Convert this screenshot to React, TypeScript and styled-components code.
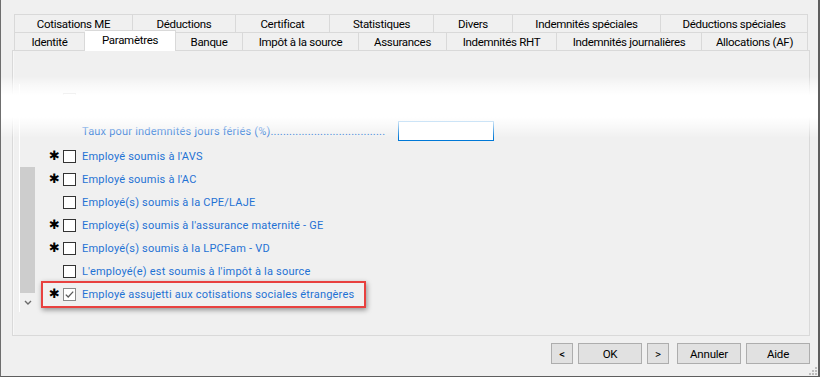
import React from "react";
import styled, { createGlobalStyle } from "styled-components";

const GlobalStyle = createGlobalStyle`
  html, body {
    margin: 0;
    padding: 0;
    background: #f0f0f0;
  }
  body {
    font-family: Roboto, "Liberation Sans", sans-serif;
  }
`;

type TabDef = { label: string; width: number; active?: boolean };

const topTabs: TabDef[] = [
  { label: "Cotisations ME", width: 119 },
  { label: "Déductions", width: 103 },
  { label: "Certificat", width: 94 },
  { label: "Statistiques", width: 104 },
  { label: "Divers", width: 79 },
  { label: "Indemnités spéciales", width: 148 },
  { label: "Déductions spéciales", width: 147 },
];

const bottomTabs: TabDef[] = [
  { label: "Identité", width: 71 },
  { label: "Paramètres", width: 91, active: true },
  { label: "Banque", width: 67 },
  { label: "Impôt à la source", width: 116 },
  { label: "Assurances", width: 88 },
  { label: "Indemnités RHT", width: 110 },
  { label: "Indemnités journalières", width: 145 },
  { label: "Allocations (AF)", width: 106 },
];

type Option = { label: string; required: boolean; checked?: boolean; highlighted?: boolean };

const options: Option[] = [
  { label: "Employé soumis à l'AVS", required: true },
  { label: "Employé soumis à l'AC", required: true },
  { label: "Employé(s) soumis à la CPE/LAJE", required: false },
  { label: "Employé(s) soumis à l'assurance maternité - GE", required: true },
  { label: "Employé(s) soumis à la LPCFam - VD", required: true },
  { label: "L'employé(e) est soumis à l'impôt à la source", required: false },
  { label: "Employé assujetti aux cotisations sociales étrangères", required: true, checked: true, highlighted: true },
];

export default function App() {
  return (
    <>
      <GlobalStyle />
      <Window>
        <TabStrip>
          <TabRow>
            {topTabs.map((t) => (
              <Tab key={t.label} $width={t.width}>
                {t.label}
              </Tab>
            ))}
          </TabRow>
          <TabRow>
            {bottomTabs.map((t) => (
              <Tab key={t.label} $width={t.width} $active={t.active}>
                {t.label}
              </Tab>
            ))}
          </TabRow>
        </TabStrip>

        <Panel>
          <ScrollBar>
            <Thumb />
            <ArrowDown>
              <svg width="8" height="5" viewBox="0 0 8 5">
                <path d="M1 1 L4 4 L7 1" fill="none" stroke="#6a6a6a" strokeWidth="1.4" />
              </svg>
            </ArrowDown>
          </ScrollBar>

          <Content>
            <OptionRow>
              <Star />
              <CheckBox />
            </OptionRow>

            <RateRow>
              <RateLabel>Taux pour indemnités jours fériés (%)</RateLabel>
              <Leader>{".".repeat(37)}</Leader>
              <RateInput />
            </RateRow>

            {options.map((o) => (
              <OptionRow key={o.label} $highlighted={o.highlighted}>
                <Star>{o.required ? "✱" : ""}</Star>
                <CheckBox $checked={o.checked}>
                  {o.checked && (
                    <svg width="11" height="11" viewBox="0 0 11 11">
                      <path d="M1.8 5.6 L4.2 8 L9.2 2.6" fill="none" stroke="#5a5a5a" strokeWidth="1.3" />
                    </svg>
                  )}
                </CheckBox>
                <OptionLabel>{o.label}</OptionLabel>
              </OptionRow>
            ))}
          </Content>
        </Panel>

        <ButtonBar>
          <DialogButton $width={22}>&lt;</DialogButton>
          <DialogButton $width={64}>OK</DialogButton>
          <DialogButton $width={22}>&gt;</DialogButton>
          <DialogButton $width={64} $gapLeft={8}>
            Annuler
          </DialogButton>
          <DialogButton $width={64}>Aide</DialogButton>
        </ButtonBar>

        <Grip>
          <svg width="8" height="8" viewBox="0 0 8 8">
            <rect x="6" y="0" width="2" height="2" fill="#bdbdbd" />
            <rect x="3" y="3" width="2" height="2" fill="#bdbdbd" />
            <rect x="6" y="3" width="2" height="2" fill="#bdbdbd" />
            <rect x="0" y="6" width="2" height="2" fill="#bdbdbd" />
            <rect x="3" y="6" width="2" height="2" fill="#bdbdbd" />
            <rect x="6" y="6" width="2" height="2" fill="#bdbdbd" />
          </svg>
        </Grip>

        <Fade />
      </Window>
    </>
  );
}

const Window = styled.div`
  position: relative;
  box-sizing: border-box;
  width: 820px;
  height: 377px;
  background: #f0f0f0;
  border-left: 1px solid #6e6e6e;
  border-right: 2px solid #5e5e5e;
  border-bottom: 1px solid #5e5e5e;
  display: flex;
  flex-direction: column;
  overflow: hidden;
`;

const TabStrip = styled.div`
  padding: 14px 0 0 13px;
  display: flex;
  flex-direction: column;
`;

const TabRow = styled.div`
  display: flex;
  height: 18px;
`;

const Tab = styled.div<{ $width: number; $active?: boolean }>`
  box-sizing: border-box;
  width: ${(p) => p.$width}px;
  height: ${(p) => (p.$active ? 21 : 18)}px;
  margin-top: ${(p) => (p.$active ? -2 : 0)}px;
  position: ${(p) => (p.$active ? "relative" : "static")};
  z-index: ${(p) => (p.$active ? 2 : 0)};
  border-top: 1px solid #d9d9d9;
  border-right: 1px solid #d9d9d9;
  &:first-child {
    border-left: 1px solid #d9d9d9;
  }
  background: ${(p) => (p.$active ? "#ffffff" : "#f0f0f0")};
  display: flex;
  align-items: ${(p) => (p.$active ? "flex-start" : "center")};
  padding-top: ${(p) => (p.$active ? 2 : 0)}px;
  justify-content: center;
  font-size: 11.5px;
  letter-spacing: -0.3px;
  color: #000;
  white-space: nowrap;
`;

const Panel = styled.div`
  box-sizing: border-box;
  margin-left: 11px;
  width: 798px;
  height: 286px;
  border: 1px solid #d9d9d9;
  box-shadow: inset 1px 0 0 #f7f7f7;
  background: #f0f0f0;
  display: flex;
  padding-left: 6px;
`;

const ScrollBar = styled.div`
  box-sizing: border-box;
  margin-top: 33px;
  width: 16px;
  height: 228px;
  border-left: 1px solid #ffffff;
  display: flex;
  flex-direction: column;
`;

const Thumb = styled.div`
  margin-top: auto;
  height: 126px;
  background: #cdcdcd;
`;

const ArrowDown = styled.div`
  height: 19px;
  display: flex;
  justify-content: center;
  padding-top: 7px;
  box-sizing: border-box;
`;

const Content = styled.div`
  flex: 1;
  padding: 37px 0 0 8px;
  display: flex;
  flex-direction: column;
  align-items: flex-start;
`;

const OptionRow = styled.div<{ $highlighted?: boolean }>`
  box-sizing: content-box;
  height: 23px;
  display: flex;
  align-items: center;
  padding: 0 10px 0 7px;
  ${(p) =>
    p.$highlighted &&
    `
    margin: -2px 0 0 -2px;
    border: 2px solid #e8413f;
    box-shadow: 1px 2px 5px rgba(0, 0, 0, 0.4);
  `}
`;

const Star = styled.span`
  width: 13px;
  font-family: "DejaVu Sans", sans-serif;
  font-size: 13px;
  font-weight: bold;
  color: #000;
  line-height: 1;
  margin-top: -3px;
  margin-left: -1px;
  margin-right: 1px;
`;

const CheckBox = styled.span<{ $checked?: boolean }>`
  box-sizing: border-box;
  width: 13px;
  height: 13px;
  background: #ffffff;
  border: 1px solid ${(p) => (p.$checked ? "#8a8a8a" : "#333333")};
  display: flex;
  align-items: center;
  justify-content: center;
  margin-right: 6px;
`;

const OptionLabel = styled.span`
  font-size: 11px;
  letter-spacing: 0.2px;
  color: #1f72d4;
  white-space: nowrap;
`;

const RateRow = styled.div`
  box-sizing: border-box;
  height: 34px;
  padding: 6px 0 0 39px;
  display: flex;
  align-items: center;
`;

const RateLabel = styled.span`
  font-size: 11px;
  letter-spacing: 0.2px;
  color: #1f72d4;
  white-space: nowrap;
`;

const Leader = styled.span`
  width: 116px;
  font-size: 11px;
  letter-spacing: 0.2px;
  color: #1f72d4;
  white-space: nowrap;
  margin-right: 11px;
`;

const RateInput = styled.div`
  box-sizing: border-box;
  width: 96px;
  height: 20px;
  background: #ffffff;
  border: 1px solid #0078d7;
`;

const ButtonBar = styled.div`
  flex: 1;
  display: flex;
  justify-content: flex-end;
  align-items: flex-start;
  padding: 7px 8px 0 0;
  gap: 5px;
`;

const DialogButton = styled.button<{ $width: number; $gapLeft?: number }>`
  box-sizing: border-box;
  width: ${(p) => p.$width}px;
  height: 21px;
  margin: 0 0 0 ${(p) => (p.$gapLeft ? p.$gapLeft - 5 : 0)}px;
  padding: 0;
  background: #e1e1e1;
  border: 1px solid #adadad;
  font-family: Roboto, "Liberation Sans", sans-serif;
  font-size: 11.5px;
  letter-spacing: -0.2px;
  color: #000;
`;

const Grip = styled.div`
  position: absolute;
  right: 1px;
  bottom: 1px;
  width: 8px;
  height: 8px;
  display: flex;
`;

const Fade = styled.div`
  position: absolute;
  left: -1px;
  right: -2px;
  top: 76px;
  height: 62px;
  pointer-events: none;
  background: linear-gradient(
    to bottom,
    rgba(255, 255, 255, 0) 0px,
    rgba(255, 255, 255, 0.6) 10px,
    #ffffff 19px,
    #ffffff 41px,
    rgba(255, 255, 255, 0.6) 50px,
    rgba(255, 255, 255, 0) 62px
  );
`;
